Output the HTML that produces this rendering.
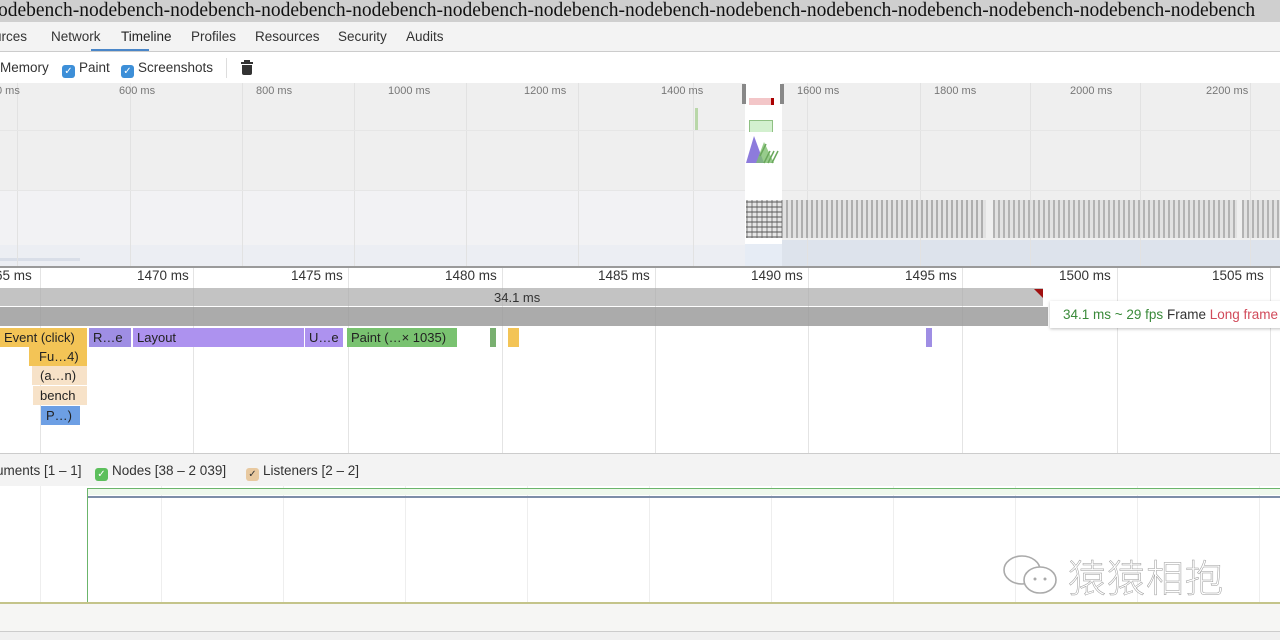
<!DOCTYPE html>
<html><head><meta charset="utf-8"><style>
*{margin:0;padding:0;box-sizing:border-box}
body{width:1280px;height:640px;overflow:hidden;background:#fff;font-family:"Liberation Sans",sans-serif;position:relative}
.a{position:absolute}
.t{font-size:13.5px;color:#333;white-space:nowrap}
.vl{position:absolute;width:1px}
.blk{position:absolute;height:19px;font-size:13px;line-height:19px;padding-left:4px;white-space:nowrap;overflow:hidden;color:#222}
.cb{display:inline-block;width:13px;height:13px;border-radius:3px;background:#3d8fd8;color:#fff;font-size:10px;line-height:13px;text-align:center;vertical-align:-2px;margin-right:4px}
</style></head><body>
<!-- title -->
<div class="a" style="left:-2px;top:0;width:1282px;height:22px;background:#cfcfcf;font-family:'Liberation Serif',serif;font-size:19.5px;line-height:21px;color:#111;white-space:nowrap;overflow:hidden">odebench-nodebench-nodebench-nodebench-nodebench-nodebench-nodebench-nodebench-nodebench-nodebench-nodebench-nodebench-nodebench-nodebench</div>
<!-- tabs -->
<div class="a" style="left:0;top:22px;width:1280px;height:30px;background:#f3f3f3;border-bottom:1px solid #ccc"></div>
<div class="a t" style="top:29px;left:-6px">urces</div>
<div class="a t" style="top:29px;left:51px">Network</div>
<div class="a t" style="top:29px;left:121px;color:#222">Timeline</div>
<div class="a" style="top:49px;left:91px;width:58px;height:2px;background:#4a86c8"></div>
<div class="a t" style="top:29px;left:191px">Profiles</div>
<div class="a t" style="top:29px;left:255px">Resources</div>
<div class="a t" style="top:29px;left:338px">Security</div>
<div class="a t" style="top:29px;left:406px">Audits</div>
<!-- toolbar -->
<div class="a t" style="top:60px;left:0px">Memory</div>
<div class="a t" style="top:60px;left:62px"><span class="cb">✓</span>Paint</div>
<div class="a t" style="top:60px;left:121px"><span class="cb">✓</span>Screenshots</div>
<div class="a" style="top:58px;left:226px;width:1px;height:20px;background:#ddd"></div>
<div class="a" style="top:60px;left:241px;width:12px;height:15px">
<div class="a" style="left:3px;top:0;width:6px;height:2px;background:#333"></div>
<div class="a" style="left:0;top:2px;width:12px;height:2px;background:#333"></div>
<div class="a" style="left:1px;top:5px;width:10px;height:10px;background:#333;border-radius:0 0 2px 2px"></div></div>
<!-- overview -->
<div class="a" style="left:0;top:83px;width:1280px;height:183px;background:#efefef"></div>
<div class="a" style="left:0;top:190px;width:745px;height:55px;background:#f2f2f4"></div>
<div class="a" style="left:0;top:245px;width:1280px;height:21px;background:#eceef3"></div>
<div class="a" style="left:782px;top:240px;width:498px;height:26px;background:#dde3ec"></div>
<div class="a" style="left:0;top:258px;width:80px;height:3px;background:#d9dee8"></div>
<div class="vl" style="left:17px;top:83px;height:183px;background:#e2e2e2"></div>
<div class="vl" style="left:130px;top:83px;height:183px;background:#e2e2e2"></div>
<div class="vl" style="left:242px;top:83px;height:183px;background:#e2e2e2"></div>
<div class="vl" style="left:354px;top:83px;height:183px;background:#e2e2e2"></div>
<div class="vl" style="left:466px;top:83px;height:183px;background:#e2e2e2"></div>
<div class="vl" style="left:578px;top:83px;height:183px;background:#e2e2e2"></div>
<div class="vl" style="left:693px;top:83px;height:183px;background:#e2e2e2"></div>
<div class="vl" style="left:807px;top:83px;height:183px;background:#e2e2e2"></div>
<div class="vl" style="left:920px;top:83px;height:183px;background:#e2e2e2"></div>
<div class="vl" style="left:1030px;top:83px;height:183px;background:#e2e2e2"></div>
<div class="vl" style="left:1140px;top:83px;height:183px;background:#e2e2e2"></div>
<div class="vl" style="left:1250px;top:83px;height:183px;background:#e2e2e2"></div>
<div class="a" style="left:0;top:130px;width:1280px;height:1px;background:#e6e6e6"></div>
<div class="a" style="left:0;top:190px;width:1280px;height:1px;background:#e6e6e6"></div>
<div class="a" style="top:85px;font-size:11px;color:#777;left:-4px">0 ms</div>
<div class="a" style="top:85px;font-size:11px;color:#777;left:119px">600 ms</div>
<div class="a" style="top:85px;font-size:11px;color:#777;left:256px">800 ms</div>
<div class="a" style="top:85px;font-size:11px;color:#777;left:388px">1000 ms</div>
<div class="a" style="top:85px;font-size:11px;color:#777;left:524px">1200 ms</div>
<div class="a" style="top:85px;font-size:11px;color:#777;left:661px">1400 ms</div>
<div class="a" style="top:85px;font-size:11px;color:#777;left:797px">1600 ms</div>
<div class="a" style="top:85px;font-size:11px;color:#777;left:934px">1800 ms</div>
<div class="a" style="top:85px;font-size:11px;color:#777;left:1070px">2000 ms</div>
<div class="a" style="top:85px;font-size:11px;color:#777;left:1206px">2200 ms</div>
<div class="a" style="left:695px;top:108px;width:3px;height:22px;background:#b9d7a9"></div>
<!-- selection window -->
<div class="a" style="left:745px;top:83px;width:37px;height:183px;background:#fff"></div>
<div class="a" style="left:742px;top:84px;width:4px;height:20px;background:#888"></div>
<div class="a" style="left:780px;top:84px;width:4px;height:20px;background:#888"></div>
<div class="a" style="left:749px;top:98px;width:25px;height:7px;background:#f3c6c8"></div>
<div class="a" style="left:771px;top:98px;width:3px;height:7px;background:#a00"></div>
<div class="a" style="left:749px;top:120px;width:24px;height:12px;background:#d3f0cf;border:1px solid #8fc083;border-bottom:none"></div>
<svg class="a" style="left:746px;top:134px" width="36" height="30"><polygon points="0,29 8,2 18,29" fill="#8d7bdc"/><polygon points="10,29 18,8 28,29" fill="#7dbf6f" opacity=".8"/><path d="M18 29l6-12M22 29l6-12M26 29l6-12M14 22l6-12" stroke="#6aa85c" stroke-width="1.5"/></svg>
<div class="a" style="left:745px;top:244px;width:37px;height:22px;background:#e6ecf5"></div>
<!-- screenshot filmstrip -->
<div class="a" style="left:746px;top:200px;width:240px;height:38px;background:repeating-linear-gradient(90deg,#999 0 2px,#ddd 2px 5px);opacity:.75"></div>
<div class="a" style="left:746px;top:200px;width:36px;height:38px;background:repeating-linear-gradient(0deg,#555 0 2px,transparent 2px 5px);opacity:.5"></div>
<div class="a" style="left:993px;top:200px;width:244px;height:38px;background:repeating-linear-gradient(90deg,#999 0 2px,#ddd 2px 5px);opacity:.7"></div>
<div class="a" style="left:1242px;top:200px;width:38px;height:38px;background:repeating-linear-gradient(90deg,#999 0 2px,#ddd 2px 5px);opacity:.7"></div>
<div class="a" style="left:0;top:266px;width:1280px;height:2px;background:#9a9a9a"></div>
<!-- ruler + flame -->
<div class="vl" style="left:40px;top:268px;height:185px;background:#e4e4e4"></div>
<div class="vl" style="left:193px;top:268px;height:185px;background:#e4e4e4"></div>
<div class="vl" style="left:348px;top:268px;height:185px;background:#e4e4e4"></div>
<div class="vl" style="left:502px;top:268px;height:185px;background:#e4e4e4"></div>
<div class="vl" style="left:655px;top:268px;height:185px;background:#e4e4e4"></div>
<div class="vl" style="left:808px;top:268px;height:185px;background:#e4e4e4"></div>
<div class="vl" style="left:962px;top:268px;height:185px;background:#e4e4e4"></div>
<div class="vl" style="left:1117px;top:268px;height:185px;background:#e4e4e4"></div>
<div class="vl" style="left:1270px;top:268px;height:185px;background:#e4e4e4"></div>
<div class="a t" style="top:268px;left:-5px">65 ms</div>
<div class="a t" style="top:268px;left:137px">1470 ms</div>
<div class="a t" style="top:268px;left:291px">1475 ms</div>
<div class="a t" style="top:268px;left:445px">1480 ms</div>
<div class="a t" style="top:268px;left:598px">1485 ms</div>
<div class="a t" style="top:268px;left:751px">1490 ms</div>
<div class="a t" style="top:268px;left:905px">1495 ms</div>
<div class="a t" style="top:268px;left:1059px">1500 ms</div>
<div class="a t" style="top:268px;left:1212px">1505 ms</div>
<div class="a" style="left:0;top:288px;width:1043px;height:18px;background:rgba(170,170,170,.7)"></div>
<div class="a t" style="top:290px;left:494px;font-size:13px">34.1 ms</div>
<svg class="a" style="left:1034px;top:289px" width="9" height="9"><polygon points="0,0 9,0 9,9" fill="#a01010"/></svg>
<div class="a" style="left:0;top:307px;width:1048px;height:19px;background:rgba(150,150,150,.8)"></div>
<div class="a" style="left:1050px;top:301px;width:240px;height:27px;background:#fff;box-shadow:0 1px 3px rgba(0,0,0,.25);font-size:13.5px;line-height:27px;padding-left:13px;white-space:nowrap"><span style="color:#3a8a3a">34.1 ms ~ 29 fps</span> <span style="color:#333">Frame</span> <span style="color:#d14a5a">Long frame</span></div>
<div class="blk" style="left:0;top:328px;width:87px;background:#f3c456">Event (click)</div>
<div class="blk" style="left:89px;top:328px;width:42px;background:#9f8ee4">R…e</div>
<div class="blk" style="left:133px;top:328px;width:171px;background:#ad92ef">Layout</div>
<div class="blk" style="left:305px;top:328px;width:38px;background:#ad92ef">U…e</div>
<div class="blk" style="left:347px;top:328px;width:110px;background:#79c270">Paint (…× 1035)</div>
<div class="a" style="left:490px;top:328px;width:6px;height:19px;background:#79b070"></div>
<div class="a" style="left:508px;top:328px;width:11px;height:19px;background:#f3c456"></div>
<div class="a" style="left:926px;top:328px;width:6px;height:19px;background:#9f8ee4"></div>
<div class="blk" style="left:29px;top:347px;width:58px;background:#f3c456;padding-left:10px">Fu…4)</div>
<div class="blk" style="left:32px;top:366px;width:55px;background:#f7e2c8;padding-left:8px">(a…n)</div>
<div class="blk" style="left:33px;top:386px;width:54px;background:#f7e2c8;padding-left:7px">bench</div>
<div class="blk" style="left:41px;top:406px;width:39px;background:#6d9fe4;padding-left:5px">P…)</div>
<!-- counters -->
<div class="a" style="left:0;top:453px;width:1280px;height:33px;background:#f3f3f3;border-top:1px solid #ccc"></div>
<div class="a t" style="top:463px;left:-4px">uments [1 – 1]</div>
<div class="a t" style="top:463px;left:95px"><span class="cb" style="background:#5cbf5c">✓</span>Nodes [38 – 2 039]</div>
<div class="a t" style="top:463px;left:246px"><span class="cb" style="background:#e8c9a0;color:#333">✓</span>Listeners [2 – 2]</div>
<div class="vl" style="left:40px;top:486px;height:118px;background:#eee"></div>
<div class="vl" style="left:161px;top:486px;height:118px;background:#eee"></div>
<div class="vl" style="left:283px;top:486px;height:118px;background:#eee"></div>
<div class="vl" style="left:405px;top:486px;height:118px;background:#eee"></div>
<div class="vl" style="left:527px;top:486px;height:118px;background:#eee"></div>
<div class="vl" style="left:649px;top:486px;height:118px;background:#eee"></div>
<div class="vl" style="left:771px;top:486px;height:118px;background:#eee"></div>
<div class="vl" style="left:893px;top:486px;height:118px;background:#eee"></div>
<div class="vl" style="left:1015px;top:486px;height:118px;background:#eee"></div>
<div class="vl" style="left:1137px;top:486px;height:118px;background:#eee"></div>
<div class="vl" style="left:1259px;top:486px;height:118px;background:#eee"></div>
<div class="a" style="left:87px;top:488px;width:1193px;height:1px;background:#6bb56b"></div>
<div class="a" style="left:87px;top:488px;width:1px;height:115px;background:#6bb56b"></div>
<div class="a" style="left:88px;top:489px;width:1192px;height:6px;background:#eef8ec"></div>
<div class="a" style="left:88px;top:496px;width:1192px;height:2px;background:#7d8ea8"></div>
<div class="a" style="left:0;top:602px;width:1280px;height:2px;background:#c4c48a"></div>
<div class="a" style="left:0;top:604px;width:1280px;height:36px;background:#f6f6f4"></div>
<div class="a" style="left:0;top:631px;width:1280px;height:1px;background:#ccc"></div>
<div class="a" style="left:0;top:632px;width:1280px;height:8px;background:#f0f0f0"></div>
<!-- watermark -->
<svg class="a" style="left:1000px;top:552px" width="66" height="48"><g fill="none" stroke="#aaa" stroke-width="1.6"><ellipse cx="22" cy="18" rx="18" ry="14"/><ellipse cx="40" cy="28" rx="16" ry="13" fill="#fff"/></g><circle cx="35" cy="27" r="1.5" fill="#aaa"/><circle cx="45" cy="27" r="1.5" fill="#aaa"/></svg>
<div class="a" style="left:1068px;top:548px;font-family:'Noto Sans CJK SC',sans-serif;font-size:38px;font-weight:300;letter-spacing:1px;-webkit-text-stroke:.5px #999;color:#fff">猿猿相抱</div>
</body></html>
